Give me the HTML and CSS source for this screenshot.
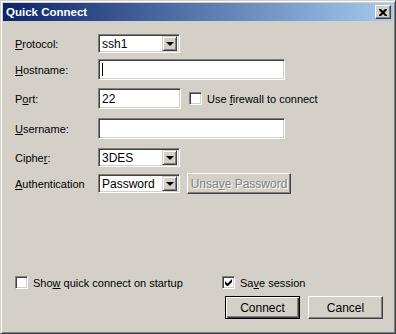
FILE: index.html
```html
<!DOCTYPE html>
<html lang="en">
<head>
    <meta charset="UTF-8">
    <title>Quick Connect</title>
    <link rel="stylesheet" href="styles.css">
</head>
<body>
    <div class="window">
        <div class="title-bar">
            <span class="title">Quick Connect</span>
            <span class="close-btn">
                <svg width="8" height="7" viewBox="0 0 8 7"><path d="M0 0h2l2 2 2-2h2v1l-2.5 2.5L8 6v1H6L4 5 2 7H0V6l2.5-2.5L0 1z" fill="#000"/></svg>
            </span>
        </div>

        <div class="form">
            <div class="row row-protocol">
                <label class="label"><u>P</u>rotocol:</label>
                <div class="select"><span class="value">ssh1</span><span class="arrow"></span></div>
            </div>
            <div class="row row-host">
                <label class="label"><u>H</u>ostname:</label>
                <div class="input wide"><span class="caret"></span></div>
            </div>
            <div class="row row-port">
                <label class="label">P<u>o</u>rt:</label>
                <div class="input short"><span class="value">22</span></div>
                <span class="check-item firewall"><span class="checkbox"></span><span>Use <u>f</u>irewall to connect</span></span>
            </div>
            <div class="row row-user">
                <label class="label"><u>U</u>sername:</label>
                <div class="input wide"></div>
            </div>
            <div class="row row-cipher">
                <label class="label">Ciphe<u>r</u>:</label>
                <div class="select"><span class="value">3DES</span><span class="arrow"></span></div>
            </div>
            <div class="row row-auth">
                <label class="label"><u>A</u>uthentication</label>
                <div class="select"><span class="value">Password</span><span class="arrow"></span></div>
                <span class="button disabled"><span>Unsa<u>v</u>e Password</span></span>
            </div>
        </div>

        <div class="footer">
            <div class="footer-checks">
                <span class="check-item startup"><span class="checkbox"></span><span>Sho<u>w</u> quick connect on startup</span></span>
                <span class="check-item save"><span class="checkbox checked"><svg width="7" height="7" viewBox="0 0 7 7"><path d="M0 2v3l2 2h1l4-4V0L2.5 4.5z" fill="#000"/></svg></span><span>Sa<u>v</u>e session</span></span>
            </div>
            <div class="footer-buttons">
                <span class="button default">Connect</span>
                <span class="button">Cancel</span>
            </div>
        </div>
    </div>
</body>
</html>
```

FILE: styles.css
```css
/* Windows 2000 style dialog */
body {
    margin: 0;
    font-family: "Liberation Sans", Arial, sans-serif;
    font-size: 11px;
    color: #000;
    background: #d4d0c8;
}

u {
    text-decoration: underline;
    text-underline-offset: 1px;
}

.window {
    width: 396px;
    height: 334px;
    box-sizing: border-box;
    background: #d4d0c8;
    border: 1px solid;
    border-color: #d4d0c8 #404040 #404040 #d4d0c8;
    box-shadow: inset 1px 1px #ffffff, inset -1px -1px #808080;
    padding: 2px;
    display: flex;
    flex-direction: column;
}

.title-bar {
    height: 18px;
    background: linear-gradient(to right, #0a246a, #a6caf0);
    display: flex;
    align-items: center;
    justify-content: space-between;
    padding: 0 2px 0 2px;
}

.title {
    color: #fff;
    font-weight: bold;
    font-size: 11.5px;
    padding-left: 1px;
}

.close-btn {
    width: 16px;
    height: 14px;
    box-sizing: border-box;
    background: #d4d0c8;
    border: 1px solid;
    border-color: #fff #404040 #404040 #fff;
    box-shadow: inset -1px -1px #808080;
    display: flex;
    align-items: center;
    justify-content: center;
    padding-right: 1px;
}

.form {
    padding: 13px 0 0 12px;
}

.row {
    display: flex;
    align-items: center;
    height: 21px;
}

.row-protocol { height: 19px; }
.row-host { margin-top: 6px; }
.row-port { margin-top: 8px; }
.row-user { margin-top: 9px; }
.row-cipher { margin-top: 9px; height: 19px; }
.row-auth { margin-top: 6px; }

.label {
    width: 83px;
    flex: none;
}

/* sunken field */
.input,
.select {
    box-sizing: border-box;
    background: #fff;
    border: 1px solid;
    border-color: #808080 #fff #fff #808080;
    box-shadow: inset 1px 1px #404040, inset -1px -1px #d4d0c8;
    display: flex;
    align-items: center;
    padding-left: 3px;
}

.input {
    height: 21px;
}

.input.wide { width: 187px; }
.input.short { width: 83px; }

.caret {
    width: 1px;
    height: 13px;
    background: #000;
}

.select {
    width: 82px;
    height: 19px;
    justify-content: space-between;
    padding-right: 2px;
}

.select .value,
.input .value {
    font-size: 12px;
}

.arrow {
    width: 15px;
    height: 15px;
    box-sizing: border-box;
    background: #d4d0c8;
    border: 1px solid;
    border-color: #d4d0c8 #404040 #404040 #d4d0c8;
    box-shadow: inset 1px 1px #fff, inset -1px -1px #808080;
    position: relative;
}

.arrow::after {
    content: "";
    position: absolute;
    left: 3px;
    top: 5px;
    border-left: 4px solid transparent;
    border-right: 4px solid transparent;
    border-top: 4px solid #000;
}

.check-item {
    display: flex;
    align-items: center;
    white-space: pre;
}

.checkbox {
    width: 13px;
    height: 13px;
    box-sizing: border-box;
    background: #fff;
    border: 1px solid;
    border-color: #808080 #fff #fff #808080;
    box-shadow: inset 1px 1px #404040, inset -1px -1px #d4d0c8;
    margin-right: 5px;
    display: flex;
    align-items: center;
    justify-content: center;
}

.firewall {
    margin-left: 8px;
}

.button {
    box-sizing: border-box;
    height: 23px;
    width: 75px;
    background: #d4d0c8;
    border: 1px solid;
    border-color: #fff #404040 #404040 #fff;
    box-shadow: inset -1px -1px #808080, inset 1px 1px #d4d0c8;
    display: flex;
    align-items: center;
    justify-content: center;
    font-size: 12px;
}

.button.default {
    border: 1px solid #000;
    box-shadow: inset 1px 1px #fff, inset -1px -1px #404040, inset -2px -2px #808080;
}

.button.disabled {
    width: 104px;
    height: 21px;
    margin-left: 7px;
    color: #808080;
    text-shadow: 1px 1px #fff;
    white-space: pre;
}

.footer {
    margin-top: auto;
    padding: 0 10px 12px 12px;
}

.footer-checks {
    display: flex;
    align-items: center;
}

.startup {
    width: 207px;
}

.footer-buttons {
    display: flex;
    justify-content: flex-end;
    gap: 8px;
    margin-top: 7px;
}
```
